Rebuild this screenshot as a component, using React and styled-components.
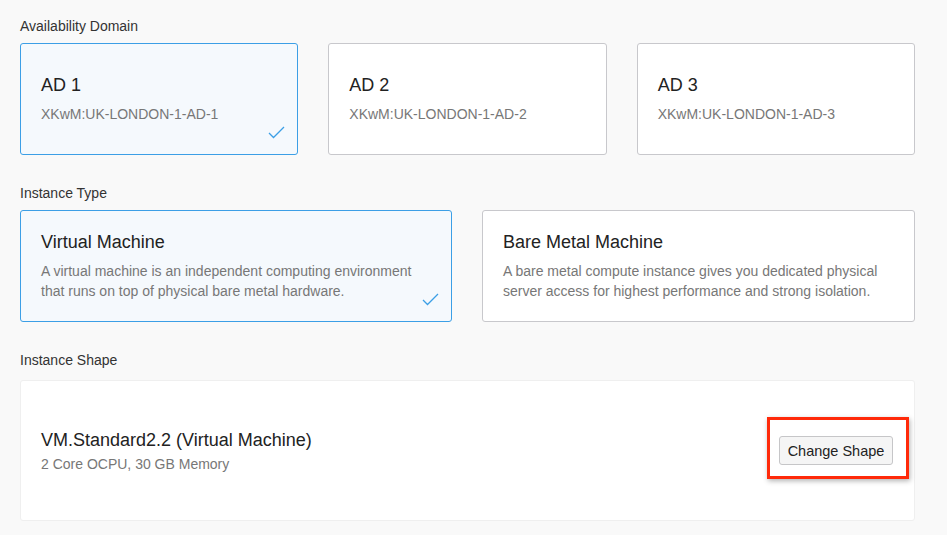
import React from 'react';
import styled, { createGlobalStyle } from 'styled-components';

const GlobalStyle = createGlobalStyle`
  html, body {
    margin: 0;
    padding: 0;
    background: #f9f9f9;
  }
  body {
    font-family: "Liberation Sans", Arial, sans-serif;
    color: #222;
  }
`;

const Page = styled.div`
  width: 895px;
  padding: 18px 32px 20px 20px;
`;

const SectionLabel = styled.div`
  font-size: 14px;
  line-height: 16px;
  color: #333;
  margin-top: ${({ $first }) => ($first ? '0' : '30px')};
  margin-bottom: ${({ $gap }) => $gap || '9px'};
`;

const CardRow = styled.div`
  display: grid;
  grid-template-columns: ${({ $cols }) => ($cols === 2 ? '432px 1fr' : 'repeat(3, minmax(0, 1fr))')};
  gap: 30px;
`;

const OptionCard = styled.div`
  position: relative;
  box-sizing: border-box;
  height: 112px;
  padding: ${({ $pad }) => $pad || '30px'} 20px 0 20px;
  border-radius: 3px;
  border: 1px solid ${({ $selected }) => ($selected ? '#3c9fe6' : '#c8c8cc')};
  background: ${({ $selected }) => ($selected ? '#f5f9fd' : '#ffffff')};
`;

const CardTitle = styled.div`
  font-size: 18px;
  line-height: 22px;
  color: #222;
`;

const CardSub = styled.div`
  margin-top: ${({ $gap }) => $gap || '9px'};
  font-size: 14px;
  line-height: ${({ $lh }) => $lh || '18px'};
  color: #777;
`;

const Check = styled.svg`
  position: absolute;
  right: 12px;
  bottom: 15px;
  width: 17px;
  height: 13px;
`;

const CheckMark = () => (
  <Check viewBox="0 0 17 13" fill="none">
    <path d="M1 7 L5.5 11.5 L16 1" stroke="#3c9fe6" strokeWidth="1.3" />
  </Check>
);

const ShapeCard = styled.div`
  box-sizing: border-box;
  height: 141px;
  display: flex;
  align-items: center;
  justify-content: space-between;
  padding: 0 21px 0 20px;
  background: #ffffff;
  border: 1px solid #efefef;
  border-radius: 3px;
`;

const ShapeSub = styled.div`
  margin-top: 4px;
  font-size: 14px;
  line-height: 18px;
  color: #777;
`;

const ButtonWrap = styled.div`
  position: relative;
`;

const Highlight = styled.div`
  position: absolute;
  top: -19px;
  left: -12px;
  right: -16px;
  bottom: -14px;
  border: 3px solid #ff2a0a;
  box-shadow: 1px 2px 5px rgba(0, 0, 0, 0.3);
  pointer-events: none;
`;

const Button = styled.button`
  box-sizing: border-box;
  width: 114px;
  height: 29px;
  padding: 0;
  white-space: nowrap;
  font-family: "Liberation Sans", Arial, sans-serif;
  font-size: 14.5px;
  color: #222;
  background: #f5f5f5;
  border: 1px solid #c6c6c8;
  border-radius: 3px;
`;

const domains = ['1', '2', '3'];

const types = [
  {
    title: 'Virtual Machine',
    text: 'A virtual machine is an independent computing environment that runs on top of physical bare metal hardware.',
    selected: true,
  },
  {
    title: 'Bare Metal Machine',
    text: 'A bare metal compute instance gives you dedicated physical server access for highest performance and strong isolation.',
    selected: false,
  },
];

export default function App() {
  return (
    <>
      <GlobalStyle />
      <Page>
        <SectionLabel $first>Availability Domain</SectionLabel>
        <CardRow $cols={3}>
          {domains.map((n) => (
            <OptionCard key={n} $selected={n === '1'}>
              <CardTitle>AD {n}</CardTitle>
              <CardSub>XKwM:UK-LONDON-1-AD-{n}</CardSub>
              {n === '1' && <CheckMark />}
            </OptionCard>
          ))}
        </CardRow>

        <SectionLabel>Instance Type</SectionLabel>
        <CardRow $cols={2}>
          {types.map((t) => (
            <OptionCard key={t.title} $selected={t.selected} $pad="20px">
              <CardTitle>{t.title}</CardTitle>
              <CardSub $gap="8px" $lh="20px">{t.text}</CardSub>
              {t.selected && <CheckMark />}
            </OptionCard>
          ))}
        </CardRow>

        <SectionLabel $gap="12px">Instance Shape</SectionLabel>
        <ShapeCard>
          <div>
            <CardTitle>VM.Standard2.2 (Virtual Machine)</CardTitle>
            <ShapeSub>2 Core OCPU, 30 GB Memory</ShapeSub>
          </div>
          <ButtonWrap>
            <Button>Change Shape</Button>
            <Highlight />
          </ButtonWrap>
        </ShapeCard>
      </Page>
    </>
  );
}
